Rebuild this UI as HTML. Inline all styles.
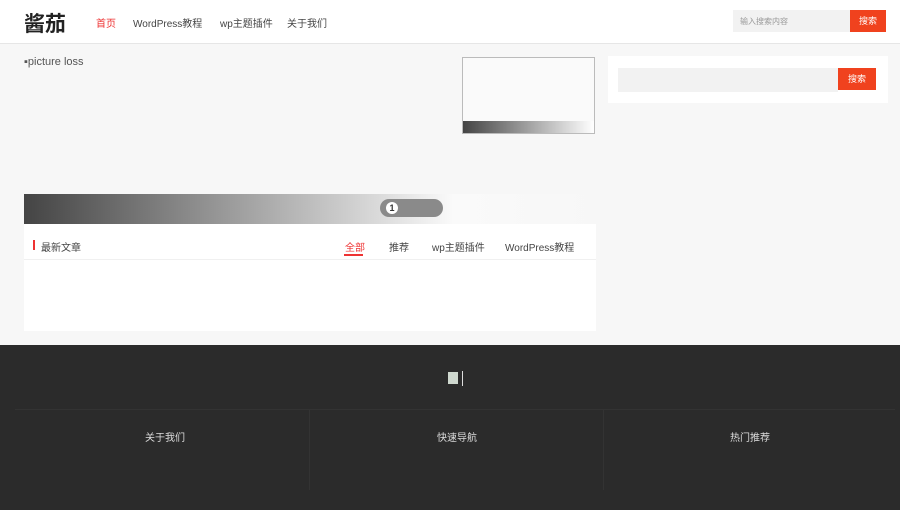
<!DOCTYPE html>
<html><head><meta charset="utf-8"><style>
*{margin:0;padding:0;box-sizing:border-box}
body{width:900px;height:510px;overflow:hidden;background:#f7f7f7;font-family:"Liberation Sans","Noto Sans CJK SC",sans-serif;font-size:10px;color:#333;position:relative}
.hd{position:absolute;left:0;top:0;width:900px;height:44px;background:#fff;border-bottom:1px solid #e6e6e6}
.logo{position:absolute;left:24px;top:8px;font-size:21px;font-weight:bold;color:#222}
.nav{position:absolute;top:15px;font-size:10px;color:#444}
.sb{position:absolute;left:733px;top:10px;width:117px;height:22px;background:#f2f2f2;color:#999;font-size:8px;padding:6px 0 0 7px}
.btn{position:absolute;background:#f0421e;color:#fff;font-size:9px;text-align:center}
.abs{position:absolute}
</style></head><body>
<div class="hd">
<div class="logo">酱茄</div>
<div class="nav" style="left:96px;color:#e33">首页</div>
<div class="nav" style="left:133px">WordPress教程</div>
<div class="nav" style="left:220px">wp主题插件</div>
<div class="nav" style="left:287px">关于我们</div>
<div class="sb">输入搜索内容</div>
<div class="btn" style="left:850px;top:10px;width:36px;height:22px;line-height:22px">搜索</div>
</div>
<div class="abs" style="left:24px;top:56px;font-size:11px;color:#555">▪picture loss</div>
<div class="abs" style="left:462px;top:57px;width:133px;height:77px;border:1px solid #bbb;background:#fafafa"></div>
<div class="abs" style="left:463px;top:121px;width:131px;height:12px;background:linear-gradient(90deg,#444,#fff)"></div>
<div class="abs" style="left:608px;top:56px;width:280px;height:47px;background:#fff"></div>
<div class="abs" style="left:618px;top:68px;width:220px;height:24px;background:#f2f2f2"></div>
<div class="btn" style="left:838px;top:68px;width:38px;height:22px;line-height:22px">搜索</div>
<div class="abs" style="left:24px;top:194px;width:572px;height:30px;background:linear-gradient(90deg,#444,#fafafa 75%,#f7f7f7)"></div>
<div class="abs" style="left:380px;top:199px;width:63px;height:18px;border-radius:9px;background:#8a8a8a"></div>
<div class="abs" style="left:386px;top:202px;width:12px;height:12px;border-radius:6px;background:#fff;color:#333;font-size:9px;font-weight:bold;text-align:center;line-height:12px">1</div>
<div class="abs" style="left:24px;top:224px;width:572px;height:107px;background:#fff"></div>
<div class="abs" style="left:24px;top:259px;width:572px;height:1px;background:#f0f0f0"></div>
<div class="abs" style="left:33px;top:240px;width:2px;height:10px;background:#e33"></div>
<div class="abs" style="left:41px;top:239px;color:#444">最新文章</div>
<div class="abs" style="left:345px;top:239px;color:#e33">全部</div>
<div class="abs" style="left:344px;top:254px;width:19px;height:2px;background:#e33"></div>
<div class="abs" style="left:389px;top:239px;color:#444">推荐</div>
<div class="abs" style="left:432px;top:239px;color:#444">wp主题插件</div>
<div class="abs" style="left:505px;top:239px;color:#444">WordPress教程</div>
<div class="abs" style="left:0;top:345px;width:900px;height:165px;background:#2b2b2b"></div>
<div class="abs" style="left:448px;top:372px;width:10px;height:12px;background:#cfd8cf"></div>
<div class="abs" style="left:462px;top:371px;width:1px;height:15px;background:#ddd"></div>
<div class="abs" style="left:15px;top:409px;width:880px;height:1px;background:#333"></div>
<div class="abs" style="left:309px;top:410px;width:1px;height:80px;background:#333"></div>
<div class="abs" style="left:603px;top:410px;width:1px;height:80px;background:#333"></div>
<div class="abs" style="left:145px;top:429px;color:#ddd">关于我们</div>
<div class="abs" style="left:437px;top:429px;color:#ddd">快速导航</div>
<div class="abs" style="left:730px;top:429px;color:#ddd">热门推荐</div>
</body></html>
